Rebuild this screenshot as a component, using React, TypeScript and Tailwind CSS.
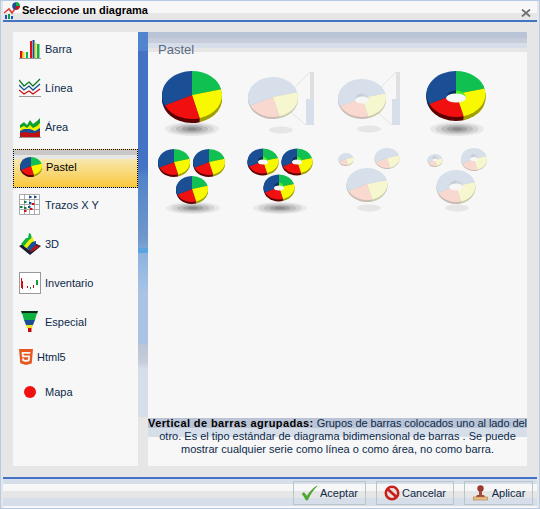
import { SiHtml5 } from "react-icons/si";

type PieDef = { cx: number; cy: number; rx: number; ry: number; d: number; hole?: [number, number, number] };

const ANGLES = [0, 76, 165, 245, 360];
const FULL = ["#10c050", "#f8f800", "#f01010", "#1a4f96"];
const FULL_SIDE = ["#0a7030", "#a0a000", "#5e0000", "#0c2c5c"];
const PALE = ["#d6dfea", "#f7f7cf", "#f8d8cf", "#d6dfea"];
const PALE_SIDE = ["#b8c6cc", "#c8ccb0", "#c8bcb4", "#b8c6cc"];

function slice(p: PieDef, from: number, to: number, dy = 0) {
  const a = (from * Math.PI) / 180;
  const b = (to * Math.PI) / 180;
  const y = p.cy + dy;
  const x1 = p.cx + p.rx * Math.sin(a);
  const y1 = y - p.ry * Math.cos(a);
  const x2 = p.cx + p.rx * Math.sin(b);
  const y2 = y - p.ry * Math.cos(b);
  return `M${p.cx} ${y}L${x1} ${y1}A${p.rx} ${p.ry} 0 ${to - from > 180 ? 1 : 0} 1 ${x2} ${y2}Z`;
}

function Pie({ p, pale }: { p: PieDef; pale?: boolean }) {
  const top = pale ? PALE : FULL;
  const side = pale ? PALE_SIDE : FULL_SIDE;
  const layers = Array.from({ length: p.d }, (_, i) => p.d - i);
  return (
    <g>
      {layers.map((dy) =>
        side.map((c, i) => <path key={`${dy}-${i}`} d={slice(p, ANGLES[i], ANGLES[i + 1], dy)} fill={c} />),
      )}
      {top.map((c, i) => (
        <path key={i} d={slice(p, ANGLES[i], ANGLES[i + 1])} fill={c} />
      ))}
      {p.hole && (
        <g>
          <path
            d={`M${p.cx - p.hole[0]} ${p.cy + p.hole[2]}A${p.hole[0]} ${p.hole[1] + 3} 0 0 1 ${p.cx} ${p.cy + p.hole[2] - p.hole[1] - 3}V${p.cy + p.hole[2]}Z`}
            fill={pale ? "#c4ccd4" : "#0c2c5c"}
          />
          <path
            d={`M${p.cx} ${p.cy + p.hole[2] - p.hole[1] - 3}A${p.hole[0]} ${p.hole[1] + 3} 0 0 1 ${p.cx + p.hole[0]} ${p.cy + p.hole[2]}H${p.cx}Z`}
            fill={pale ? "#d0d4d8" : "#40f020"}
          />
          <ellipse cx={p.cx} cy={p.cy + p.hole[2]} rx={p.hole[0]} ry={p.hole[1]} fill="#f7f7f7" />
        </g>
      )}
    </g>
  );
}

function Shadow({ cx, cy, pale, rx = 27, ry = 7 }: { cx: number; cy: number; pale?: boolean; rx?: number; ry?: number }) {
  if (pale) return <ellipse cx={cx} cy={cy} rx={12} ry={3.5} fill="#e6e6e6" />;
  return (
    <g>
      <ellipse cx={cx} cy={cy} rx={rx} ry={ry} fill="#e8e8e8" />
      <ellipse cx={cx} cy={cy} rx={rx * 0.8} ry={ry * 0.8} fill="#d4d4d4" />
      <ellipse cx={cx} cy={cy} rx={rx * 0.6} ry={ry * 0.6} fill="#bcbcbc" />
      <ellipse cx={cx} cy={cy} rx={rx * 0.38} ry={ry * 0.38} fill="#a0a0a0" />
      <ellipse cx={cx} cy={cy} rx={rx * 0.18} ry={ry * 0.2} fill="#8c8c8c" />
    </g>
  );
}

// little side bar next to the "exploded" pale pies
function Gizmo({ x, y0, y1 }: { x: number; y0: number; y1: number }) {
  return (
    <g>
      <path d={`M${x - 12} ${y0}L${x + 4} 72M${x - 15} ${y1}L${x} 125`} stroke="#e4e4e4" fill="none" />
      <rect x={x + 4} y={72} width={4} height={27} fill="#e0e0e0" />
      <rect x={x} y={99} width={8} height={26} fill="#d6dfea" />
    </g>
  );
}

function Thumb({ x, y, children }: { x: number; y: number; children: React.ReactNode }) {
  return (
    <svg width={88} height={76} viewBox={`${x} ${y} 88 76`} className="block">
      {children}
    </svg>
  );
}

function Thumbnails() {
  const h = (rx: number, ry: number, off: number) => [rx, ry, off] as [number, number, number];
  return (
    <div className="grid grid-cols-[repeat(4,88px)] grid-rows-[repeat(2,76px)] pl-[2px] pt-[14px]">
      <Thumb x={150} y={66}>
        <Shadow cx={192} cy={129} />
        <Pie p={{ cx: 192, cy: 95, rx: 30, ry: 24, d: 4 }} />
      </Thumb>
      <Thumb x={238} y={66}>
        <Shadow cx={281} cy={130} pale />
        <Gizmo x={306} y0={88} y1={112} />
        <Pie p={{ cx: 273, cy: 97, rx: 25, ry: 20, d: 2 }} pale />
      </Thumb>
      <Thumb x={326} y={66}>
        <Shadow cx={369} cy={129} pale />
        <Gizmo x={392} y0={88} y1={112} />
        <Pie p={{ cx: 362, cy: 98, rx: 24, ry: 19, d: 2, hole: h(7, 3.5, 2) }} pale />
      </Thumb>
      <Thumb x={414} y={66}>
        <Shadow cx={457} cy={129} />
        <Pie p={{ cx: 456, cy: 94, rx: 29.5, ry: 23, d: 4, hole: h(10, 4.5, 4) }} />
      </Thumb>
      <Thumb x={150} y={142}>
        <Shadow cx={193} cy={208} ry={6} />
        <Pie p={{ cx: 174, cy: 162, rx: 16, ry: 13, d: 2 }} />
        <Pie p={{ cx: 209, cy: 162, rx: 16, ry: 13, d: 2 }} />
        <Pie p={{ cx: 192, cy: 189, rx: 16, ry: 13, d: 2 }} />
      </Thumb>
      <Thumb x={238} y={142}>
        <Shadow cx={280} cy={208} ry={6} />
        <Pie p={{ cx: 263, cy: 161, rx: 15.5, ry: 12.5, d: 2, hole: h(5, 2.5, 1) }} />
        <Pie p={{ cx: 297, cy: 161, rx: 15.5, ry: 12.5, d: 2, hole: h(5, 2.5, 1) }} />
        <Pie p={{ cx: 279, cy: 187, rx: 15.5, ry: 12.5, d: 2, hole: h(5, 2.5, 1) }} />
      </Thumb>
      <Thumb x={326} y={142}>
        <Shadow cx={369} cy={208} pale />
        <Pie p={{ cx: 346, cy: 159, rx: 7.5, ry: 6, d: 1 }} pale />
        <Pie p={{ cx: 387, cy: 158, rx: 12.5, ry: 10, d: 1 }} pale />
        <Pie p={{ cx: 367, cy: 184, rx: 20.5, ry: 16, d: 2 }} pale />
      </Thumb>
      <Thumb x={414} y={142}>
        <Shadow cx={457} cy={208} pale />
        <Pie p={{ cx: 435, cy: 160, rx: 7.5, ry: 6, d: 1, hole: h(2.5, 1.2, 0) }} pale />
        <Pie p={{ cx: 474, cy: 159, rx: 13, ry: 11, d: 1, hole: h(4, 2, 0) }} pale />
        <Pie p={{ cx: 456, cy: 186, rx: 19.5, ry: 16, d: 2, hole: h(7, 3.5, 1) }} pale />
      </Thumb>
    </div>
  );
}

function BarIcon() {
  const bars = [
    [1, 13, 2.5, "#e01010"],
    [3.5, 14, 2, "#f0e000"],
    [7, 14, 2, "#10b050"],
    [11, 3, 2, "#e01010"],
    [13.5, 2, 2, "#1a4f96"],
    [16, 5, 1.5, "#f0e000"],
    [18, 6, 2.5, "#10b050"],
  ] as const;
  return (
    <svg width={22} height={22} viewBox="0 0 22 22">
      {bars.map(([x, y, w, c]) => (
        <rect key={x} x={x} y={y} width={w} height={20 - y} fill={c} />
      ))}
      <rect x={0} y={20} width={22} height={1} fill="#999" />
    </svg>
  );
}

function LineIcon() {
  return (
    <svg width={22} height={22} viewBox="0 0 22 22" fill="none" strokeWidth={1.3}>
      <path d="M0 3L5 9L10 5L14 9L21 2" stroke="#0a7a20" />
      <path d="M0 8L5 13L10 9L14 13L21 7" stroke="#1a4f96" />
      <path d="M0 13L5 17L10 14L14 17L21 12" stroke="#d01010" />
      <rect x={0} y={19} width={22} height={1} fill="#999" stroke="none" />
    </svg>
  );
}

function AreaIcon() {
  return (
    <svg width={22} height={22} viewBox="0 0 22 22">
      <path d="M1 8L5 5L8 8L11 3L14 7L18 4L21 1V20H1Z" fill="#10a030" />
      <path d="M1 11L5 9L8 11L11 8L14 11L18 9L21 6V20H1Z" fill="#f0f000" />
      <path d="M1 14L5 12L11 12L16 14L21 11V20H1Z" fill="#1a4f96" />
      <path d="M1 16L5 15L11 16L16 16L21 14V20H1Z" fill="#c01010" />
      <rect x={0} y={20} width={22} height={1} fill="#999" />
    </svg>
  );
}

function ScatterIcon() {
  const dots = [
    [10, 2, "#1a4f96"], [15, 2, "#1a4f96"], [5, 7, "#108040"], [10, 8, "#1a4f96"], [13, 9, "#d01010"],
    [1, 12, "#108040"], [5, 13, "#108040"], [9, 12, "#1a4f96"], [11, 14, "#d01010"], [5, 16, "#d01010"],
  ] as const;
  return (
    <svg width={22} height={22} viewBox="0 0 22 22">
      <path d="M0.5 .5H20.5V20.5H.5ZM5.5 .5V20.5M10.5 .5V20.5M15.5 .5V20.5M.5 5.5H20.5M.5 10.5H20.5M.5 15.5H20.5" fill="#fff" stroke="#aaa" />
      {dots.map(([x, y, c]) => (
        <rect key={`${x}-${y}`} x={x} y={y} width={2.5} height={2} fill={c} />
      ))}
    </svg>
  );
}

function CubeIcon() {
  return (
    <svg width={22} height={22} viewBox="0 0 22 22">
      <path d="M0 13L11 8L22 13L11 22Z" fill="#1c1c38" />
      <path d="M2 11L7 5L9 5L10 0L12 1L13 7L7 15Z" fill="#10b040" />
      <path d="M5 13L10 7L14 4L15 10L10 17Z" fill="#f0f000" />
      <path d="M8 15L13 9L17 8L17 13L11 18Z" fill="#1a4f96" />
      <path d="M11 18L16 13L20 12L19 15L12 19Z" fill="#c01010" />
    </svg>
  );
}

function StockIcon() {
  return (
    <svg width={22} height={22} viewBox="0 0 22 22">
      <rect x={0.5} y={0.5} width={21} height={21} fill="#fff" stroke="#999" />
      <rect x={2} y={6} width={1} height={10} fill="#d01010" />
      <rect x={3} y={9} width={1} height={8} fill="#d01010" />
      <rect x={8} y={14} width={1} height={2} fill="#d01010" />
      <rect x={11} y={15} width={1} height={2} fill="#108040" />
      <rect x={14} y={13} width={1} height={3} fill="#d01010" />
      <rect x={17} y={8} width={2} height={5} fill="#10a040" />
    </svg>
  );
}

function FunnelIcon() {
  return (
    <svg width={22} height={22} viewBox="0 0 22 22">
      <path d="M2 0H19L18 3H3Z" fill="#102a18" />
      <path d="M3 2H18L16 9H5Z" fill="#10b040" />
      <path d="M5 9H16L14 14H7Z" fill="#1a4f96" />
      <path d="M7 14H14L13 17H8Z" fill="#f0e020" />
      <rect x={9} y={17} width={3.5} height={4} fill="#c80808" />
    </svg>
  );
}

function SmallPie() {
  return (
    <svg width={24} height={22} viewBox="0 0 24 22">
      <Pie p={{ cx: 12, cy: 10, rx: 11, ry: 9, d: 2 }} />
    </svg>
  );
}

const ROWS = [
  { label: "Barra", icon: <BarIcon />, row: "h-[36px] pb-[2px]" },
  { label: "Línea", icon: <LineIcon />, row: "h-[40px]" },
  { label: "Área", icon: <AreaIcon />, row: "h-[39px] mb-[2px]" },
  { label: "Pastel", icon: <SmallPie />, row: "h-[39px]" },
  { label: "Trazos X Y", icon: <ScatterIcon />, row: "h-[34px]" },
  { label: "3D", icon: <CubeIcon />, row: "h-[44px]" },
  { label: "Inventario", icon: <StockIcon />, row: "h-[34px]" },
  { label: "Especial", icon: <FunnelIcon />, row: "h-[44px]" },
];

function Sidebar() {
  return (
    <div className="w-[125px] bg-[#f7f7f7] text-[11px] text-[#0c2a4a]">
      {ROWS.map((r) =>
        r.label === "Pastel" ? (
          <div
            key={r.label}
            className="flex h-[39px] items-center gap-[3px] border border-dotted border-black bg-[linear-gradient(#c8c8c8_0,#c8c8c8_5px,#e6e6e6_5px,#e6e6e6_9px,#f7e8b0_9px,#fac83c_100%)] pb-[3px] pl-[5px] text-black"
          >
            <div className="w-[24px] shrink-0">{r.icon}</div>
            {r.label}
          </div>
        ) : (
          <div key={r.label} className={`flex items-center gap-[4px] pl-[6px] ${r.row}`}>
            <div className="w-[22px] shrink-0">{r.icon}</div>
            {r.label}
          </div>
        ),
      )}
      <div className="flex h-[26px] items-center gap-[3px] pl-[5px]">
        <SiHtml5 className="text-[16px] text-[#e8561f]" />
        Html5
      </div>
      <div className="flex h-[44px] items-center gap-[9px] pl-[11px]">
        <div className="size-[12px] rounded-full bg-[#f01010]" />
        Mapa
      </div>
    </div>
  );
}

function CheckIcon() {
  return (
    <svg width={17} height={16} viewBox="0 0 17 16">
      <path d="M1 9L3 7.5L6 11.5C8.5 7 11.5 3.5 16 1C12 5 9 9.5 6.5 15H5C4 12.5 2.5 10.5 1 9Z" fill="#4cae28" stroke="#2f8a14" strokeWidth={0.5} />
    </svg>
  );
}

function NoIcon() {
  return (
    <svg width={16} height={16} viewBox="0 0 16 16" fill="none">
      <circle cx={8} cy={8} r={6.2} fill="#e8e0dc" stroke="#c8201c" strokeWidth={2.6} />
      <path d="M3.5 4L12.5 12" stroke="#c8201c" strokeWidth={2.8} />
    </svg>
  );
}

function StampIcon() {
  return (
    <svg width={18} height={16} viewBox="0 0 18 16">
      <circle cx={8.5} cy={3.5} r={3.2} fill="#9a3a30" />
      <path d="M7 6H10V10H12L13 12H4L5 10H7Z" fill="#a44a38" />
      <rect x={1.5} y={12} width={14} height={3} fill="#e8c088" stroke="#b07840" strokeWidth={0.6} />
    </svg>
  );
}

function FooterButton({ label, icon, className }: { label: string; icon: React.ReactNode; className: string }) {
  return (
    <button className={`flex h-[24px] items-center justify-center gap-[2px] border border-[#b8c6cc] text-[11px] text-[#0c2a4a] ${className}`}>
      {icon}
      {label}
    </button>
  );
}

export default function App() {
  return (
    <div className="flex h-[509px] w-[540px] flex-col border border-[#b5cbe8] bg-[#e6e6e6] font-['Liberation_Sans',sans-serif]">
      {/* title bar */}
      <div className="mx-[2px] flex h-[19px] items-center bg-[linear-gradient(#f7f7f7_0,#f7f7f7_12px,#e6e6e6_12px)] pr-[6px]">
        <svg width={18} height={18} viewBox="0 0 18 18" className="shrink-0">
          <path d="M1 11L6 7L9 11L13 5" fill="none" stroke="#e04040" strokeWidth={1.6} />
          <rect x={2} y={13} width={2} height={4} fill="#1a4fd0" />
          <rect x={5} y={12} width={2} height={5} fill="#10a040" />
          <rect x={8} y={14} width={2} height={3} fill="#1a4fd0" />
          <circle cx={13} cy={4} r={3.8} fill="#1a4f96" />
          <path d="M13 4V0.2A3.8 3.8 0 0 1 16.8 4Z" fill="#10b040" />
          <path d="M13 4H16.8A3.8 3.8 0 0 1 12 7.7Z" fill="#d01010" />
        </svg>
        <span className="ml-[1px] text-[11px] font-bold text-black">Seleccione un diagrama</span>
        <svg width={10} height={8} viewBox="0 0 10 8" className="ml-auto mt-[5px]">
          <path d="M1 .5L9 7.5M9 .5L1 7.5" stroke="#707070" strokeWidth={1.8} />
        </svg>
      </div>
      <div className="mx-[2px] h-[2px] bg-[#4472c4]" />

      {/* body */}
      <div className="ml-[12px] mr-[12px] mt-[10px] flex h-[434px]">
        <Sidebar />
        <div className="w-[10px] bg-[linear-gradient(#5084cf_0,#5084cf_19px,#4472c4_19px,#4472c4_135px,#5284cb_145px,#6f97cb_205px,#7aa4d4_216px,#5ba3e0_216px,#5ba3e0_221px,#8ab3dd_221px,#a9c2e6_260px,#a9c2e6_312px,#bac4d6_312px,#c6ccd9_330px,#d6deea_337px,#d6deea_385px,#e6e6e6_385px)]" />
        <div className="relative flex w-[379px] flex-col bg-[#f7f7f7]">
          <div className="h-[20px] bg-[linear-gradient(#b9c5d7_0,#b9c5d7_6px,#c6ccd9_6px,#c6ccd9_11px,#d6deea_11px,#d6deea_16px,#e6e6e6_16px)] pl-[10px] pt-[10px] text-[13px] leading-[16px] text-[#5a6a85]">
            Pastel
          </div>
          <Thumbnails />
          <div className="mb-[10px] mt-auto whitespace-nowrap bg-[linear-gradient(#f7f7f7_0,#f7f7f7_1px,#bac4d6_1px,#bac4d6_11px,#d6deea_11px,#d6deea_20px,#f7f7f7_20px)] text-center text-[11px] leading-[13px] text-[#0c2a4a]">
            <div className="tracking-[-0.06px]">
              <b className="tracking-[0.4px] text-black">Vertical de barras agrupadas:</b> Grupos de barras colocados uno al lado del
            </div>
            <div>otro. Es el tipo estándar de diagrama bidimensional de barras . Se puede</div>
            <div>mostrar cualquier serie como línea o como área, no como barra.</div>
          </div>
        </div>
      </div>

      {/* footer */}
      <div className="mx-[2px] mt-[11px] h-[2px] bg-[#4472c4]" />
      <div className="mx-[2px] flex flex-1 justify-end gap-[10px] bg-[linear-gradient(#d6deea_0,#d6deea_5px,#f7f7f7_5px,#f7f7f7_12px,#e6e6e6_12px,#e6e6e6_19px,#d6deea_19px,#d6deea_27px,#f7f7f7_27px)] pr-[4px] pt-[2px]">
        <FooterButton label="Aceptar" icon={<CheckIcon />} className="w-[73px]" />
        <FooterButton label="Cancelar" icon={<NoIcon />} className="w-[78px]" />
        <FooterButton label="Aplicar" icon={<StampIcon />} className="w-[69px]" />
      </div>
    </div>
  );
}
